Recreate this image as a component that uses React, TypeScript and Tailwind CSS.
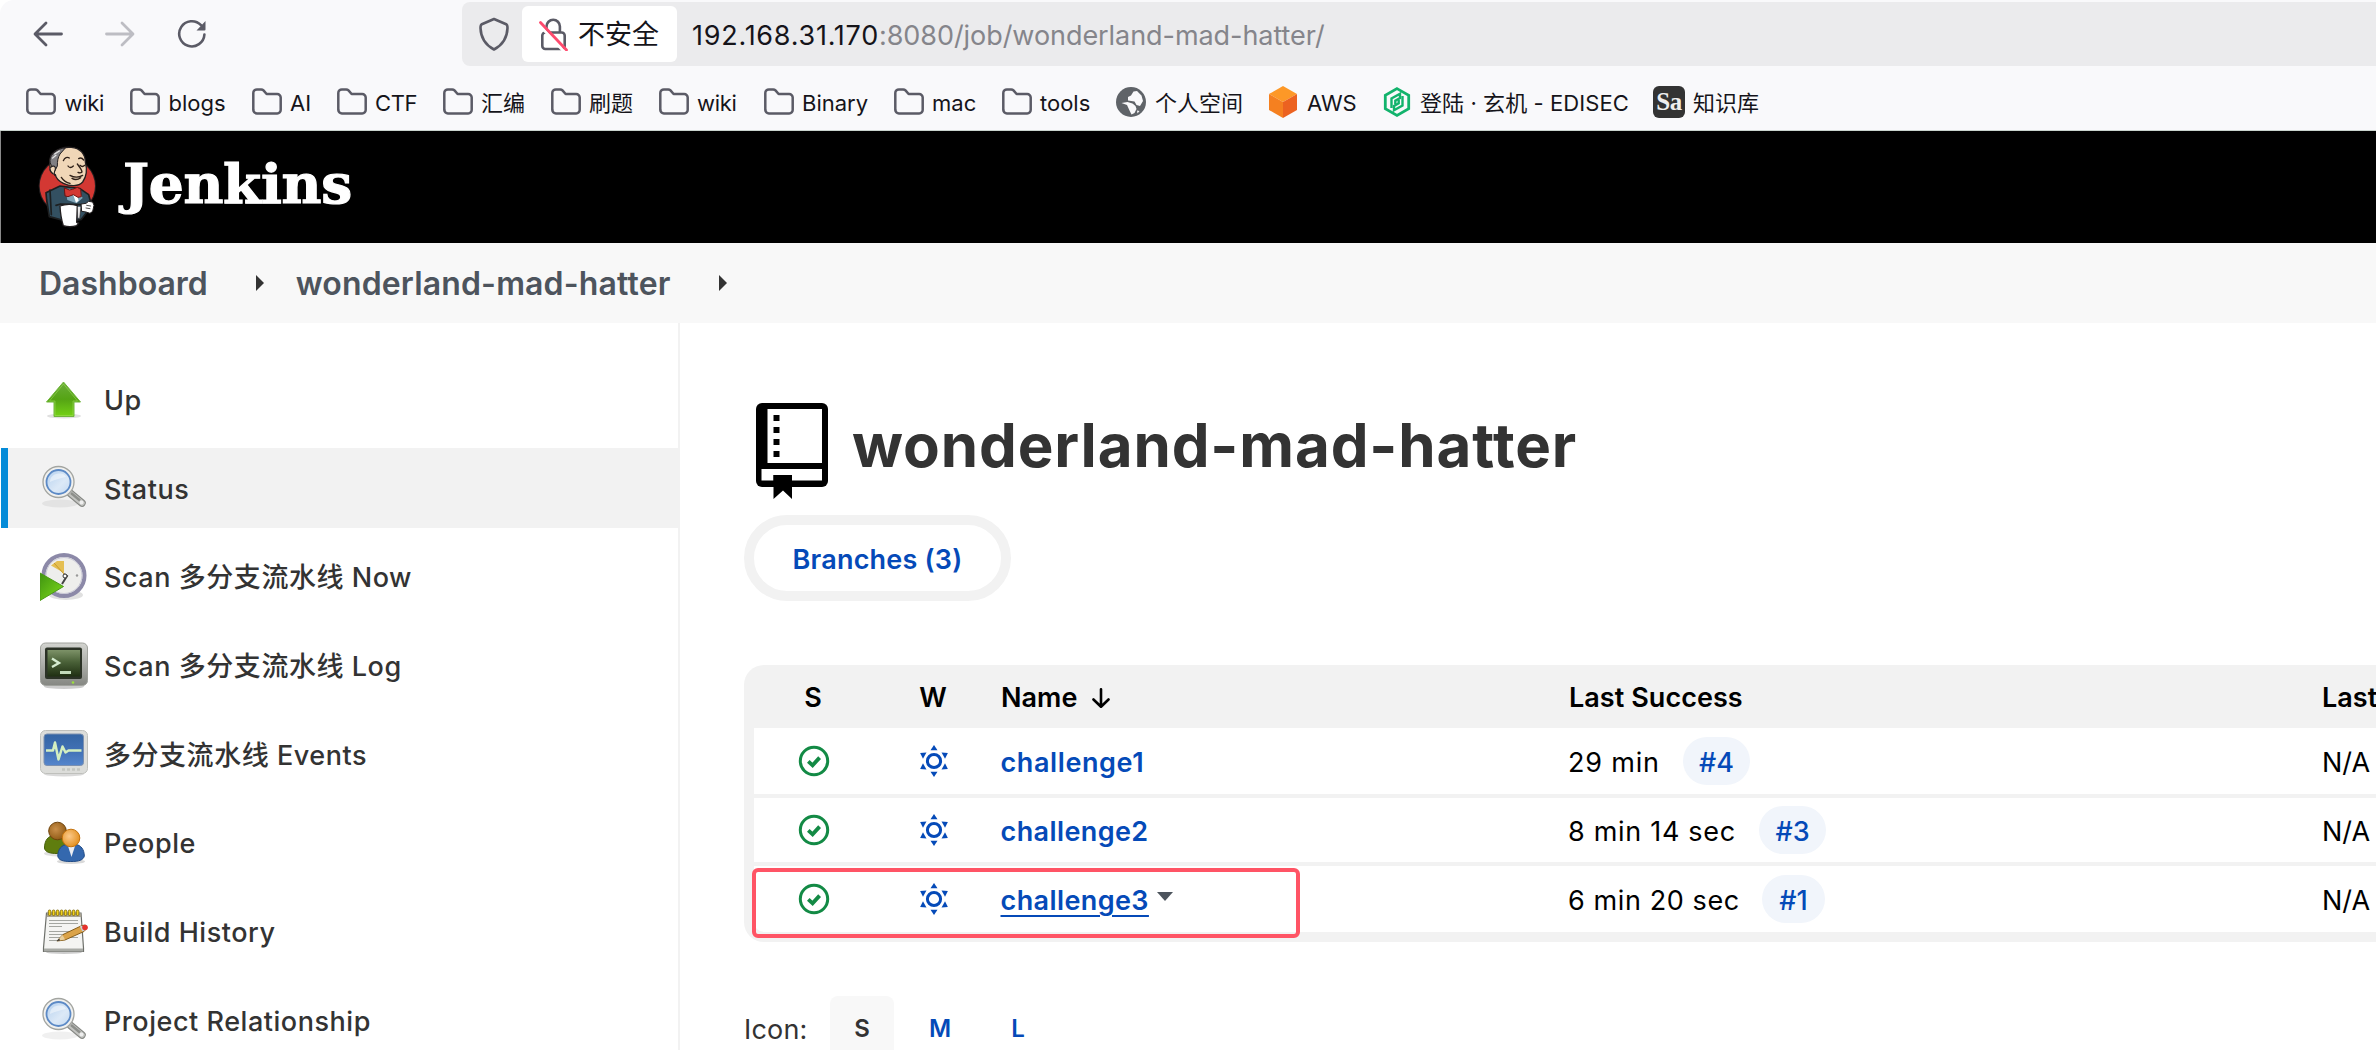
import React from "react";

const stack = "font-['Inter','Noto_Sans_CJK_SC',sans-serif]";

function BackArrow({ className, flip }: { className: string; flip?: boolean }) {
  return (
    <svg width="30" height="26" viewBox="0 0 30 26" fill="none" stroke="currentColor" strokeWidth="2.800" strokeLinecap="round" strokeLinejoin="round" className={className}>
      {flip ? <path d="M1.500 13H27.500M17 2l11 11-11 11" /> : <path d="M28.500 13H2.500M13 2L2 13l11 11" />}
    </svg>
  );
}

function Reload() {
  return (
    <svg width="30" height="30" viewBox="0 0 30 30" fill="none" className="text-[#5b5b66]">
      <path d="M24 6.200A12.600 12.600 0 1 0 27.400 15.500" stroke="currentColor" strokeWidth="2.600" strokeLinecap="round" />
      <path d="M28.500 2v8.600a1 1 0 0 1-1 1h-8z" fill="currentColor" />
    </svg>
  );
}

function Shield() {
  return (
    <svg width="30" height="34" viewBox="0 0 30 34" fill="none" stroke="#5b5b66" strokeWidth="2.600" strokeLinejoin="round">
      <path d="M15 2 2.800 7.200C1.500 7.800 1.500 9 1.500 11c.3 10 5 17 13.500 21.500C23.500 28 28.200 21 28.500 11c0-2 0-3.200-1.300-3.800z" />
    </svg>
  );
}

function LockOff() {
  return (
    <svg width="32" height="34" viewBox="0 0 32 34" fill="none">
      <path d="M8.500 15V9.500a6.700 6.700 0 0 1 13.400 0V15" stroke="#5b5b66" strokeWidth="2.600" />
      <rect x="4.300" y="15.500" width="22.400" height="16.500" rx="3" stroke="#5b5b66" strokeWidth="2.600" />
      <path d="M0 6.500 26 34.500" stroke="#fff" strokeWidth="3" />
      <path d="M2.500 5.500 28.500 33" stroke="#ff4b6e" strokeWidth="2.800" strokeLinecap="round" />
    </svg>
  );
}

function Folder() {
  return (
    <svg width="30" height="27" viewBox="0 0 30 27" fill="none" stroke="#5b5b66" strokeWidth="2.500" strokeLinejoin="round">
      <path d="M1.300 5A3.600 3.600 0 0 1 4.900 1.400h4.300c1 0 1.700.4 2.300 1L14.600 6h10.600A3.500 3.500 0 0 1 28.700 9.500v12.400a3.500 3.500 0 0 1-3.500 3.500H4.900a3.600 3.600 0 0 1-3.600-3.500z" />
    </svg>
  );
}

function Globe() {
  return (
    <svg width="30" height="30" viewBox="0 0 30 30">
      <circle cx="15" cy="15" r="15" fill="#5f6368" />
      <path d="M12 10l3-1.500 2.500-4L21 4l4.500 4.500L27 14l-3 5-3.500-1-2-3.500-6.500-1z" fill="#f9f9fb" />
      <path d="M5.500 16l6-1 5 1.500 3 2.500 1 3-2 4-3 1.500-2-4-2.500-5.500z" fill="#f9f9fb" />
      <path d="M21 23.500l2.500.5-2 2.500z" fill="#f9f9fb" />
    </svg>
  );
}

function Cube() {
  return (
    <svg width="30" height="32" viewBox="0 0 30 32">
      <path d="M15 0 29 8 15 16 1 8z" fill="#fd9827" />
      <path d="M1 8l14 8v16L1 24z" fill="#f58020" />
      <path d="M29 8 15 16v16l14-8z" fill="#ec6220" />
    </svg>
  );
}

function HexLogo() {
  return (
    <svg width="28" height="30" viewBox="0 0 28 30" fill="none" stroke="#12b36c">
      <path d="M14 1.600 25.700 8.200v13.600L14 28.400 2.300 21.800V8.200z" strokeWidth="2.800" />
      <path d="M8.500 21v-9.500L17 6.700v4.300l-4.700 2.700v3.600" strokeWidth="2.400" />
      <path d="M19.500 9v9.500L11 23.300V19l4.700-2.700v-3.600" strokeWidth="2.400" />
    </svg>
  );
}

function SaBadge() {
  return (
    <span className="flex h-8 w-8 items-center justify-center rounded-[6px] bg-[#333] font-['Liberation_Serif',serif] text-[25px] leading-none font-bold tracking-[-0.5px] text-[#eee]">
      Sa
    </span>
  );
}

const bookmarks: { label: string; icon: React.ReactNode; cls: string }[] = [
  { label: "wiki", icon: <Folder />, cls: "w-[104px] gap-[8.500px] tracking-[-0.3px]" },
  { label: "blogs", icon: <Folder />, cls: "w-[122px] gap-[8.500px]" },
  { label: "AI", icon: <Folder />, cls: "w-[85px] gap-[8px]" },
  { label: "CTF", icon: <Folder />, cls: "w-[106px] gap-[8px] tracking-[-0.4px]" },
  { label: "汇编", icon: <Folder />, cls: "w-[108px] gap-[8px]" },
  { label: "刷题", icon: <Folder />, cls: "w-[108px] gap-[8px]" },
  { label: "wiki", icon: <Folder />, cls: "w-[105px] gap-[8px] tracking-[-0.3px]" },
  { label: "Binary", icon: <Folder />, cls: "w-[130px] gap-[8px]" },
  { label: "mac", icon: <Folder />, cls: "w-[108px] gap-[8px]" },
  { label: "tools", icon: <Folder />, cls: "w-[114px] gap-[8px]" },
  { label: "个人空间", icon: <Globe />, cls: "w-[152px] gap-[9px]" },
  { label: "AWS", icon: <Cube />, cls: "w-[115px] gap-[9px]" },
  { label: "登陆 · 玄机 - EDISEC", icon: <HexLogo />, cls: "w-[270px] gap-[9px] tracking-[0.08px]" },
  { label: "知识库", icon: <SaBadge />, cls: "w-[120px] gap-[8px]" },
];

function BrowserChrome() {
  return (
    <div className="h-[130px] bg-[#f9f9fb] text-[#15141a]">
      <div className="flex h-[68px] items-center pl-[33px]">
        <BackArrow className="text-[#5b5b66]" />
        <BackArrow flip className="ml-[42px] text-[#bdbdc3]" />
        <div className="ml-[42px]">
          <Reload />
        </div>
        <div className="ml-[255px] flex h-16 flex-1 items-center rounded-l-[8px] bg-[#ebebed] pl-[17px]">
          <Shield />
          <div className="ml-[13px] flex h-[56px] w-[155px] items-center rounded-[6px] bg-white pl-[16px]">
            <LockOff />
            <span className="ml-[8px] pt-px text-[27px] leading-8 font-normal">不安全</span>
          </div>
          <span className="ml-[15px] pt-[3px] text-[27px] leading-8 tracking-[0.75px]">192.168.31.170</span>
          <span className="pt-[3px] text-[27px] leading-8 tracking-[-0.06px] text-[#85858b]">:8080/job/wonderland-mad-hatter/</span>
        </div>
      </div>
      <div className="flex h-[62px] items-center pt-[8px] pl-[26px]">
        {bookmarks.map((b, i) => (
          <div key={i} className={`flex shrink-0 items-center text-[22px] leading-7 whitespace-nowrap ${b.cls}`}>
            <span className="-mt-[3px] shrink-0">{b.icon}</span>
            <span>{b.label}</span>
          </div>
        ))}
      </div>
    </div>
  );
}

function Butler() {
  return (
    <svg width="70" height="95" viewBox="0 0 210 285" strokeLinejoin="round" strokeLinecap="round">
      <circle cx="100" cy="138" r="86" fill="#231f20" />
      <circle cx="100" cy="138" r="83" fill="#d33833" />
      <path d="M10 206h184v79H10z" fill="#000" />
      <path d="M36 158 78 138l60 8 26 18 6 22-8 26-20 26-36 8-60-16-8-50z" fill="#335061" stroke="#1d1f20" strokeWidth="5" />
      <path d="M94 146h38l14 28-18 16-28-10z" fill="#7fa5b8" />
      <path d="M116 160l10-8 8 30-8 6z" fill="#fff" />
      <path d="M56 40C66 28 90 20 112 22c26 2 42 20 42 44 6 22 3 44-8 60-12 14-38 14-58 4-10-5-22-14-24-26-14-4-18-12-16-24-2-16-2-30 8-40z" fill="#f0d6b7" stroke="#231f20" strokeWidth="4" />
      <path d="M52 76C44 64 48 48 60 38c8-8 22-14 34-14L78 42c-6 10-8 20-8 36l-6 12z" fill="#807f83" stroke="#231f20" strokeWidth="3" />
      <path d="M62 42l14-9M56 54l10-8" stroke="#e4e4e4" strokeWidth="4" />
      <path d="M50 82c8-8 16-2 14 6s-6 10-2 18" fill="#f0d6b7" stroke="#231f20" strokeWidth="3.500" />
      <g fill="none" stroke="#2f2018" strokeWidth="4">
        <path d="M88 62c4-9 12-12 18-8M134 56c6-4 12 0 15 4" />
        <path d="M102 78c4 6 10 6 16 0M138 76c4 4 10 4 14 0" />
        <path d="M130 72c6 8 14 18 14 24-4 4-8 3-12 1" />
        <path d="M108 106c14 8 24 8 38 0M114 115c10 6 18 4 26-2M82 112c8 12 16 16 26 18" />
      </g>
      <path d="M92 144l14 6 10-2 14-6 10 6 2 22-10 2-14-8-16 6-8-2z" fill="#d33833" stroke="#6d1412" strokeWidth="3" />
      <path d="M48 150l4 74M66 196l14-4 60 2" fill="none" stroke="#1d1f20" strokeWidth="5" />
      <path d="M78 198c16-6 36-6 52-1l-2 50 6 2-6 8c-12 4-28 4-40 0-6-18-9-38-10-59z" fill="#fff" stroke="#231f20" strokeWidth="4" />
      <path d="M130 200l1 34 6 2 4-36" fill="#e9e9ea" stroke="#231f20" strokeWidth="2" />
      <path d="M142 192l14-2 8-6 12 2 4 10-4 18-8 6-12-4-12-2z" fill="#fff" stroke="#231f20" strokeWidth="3" />
      <path d="M158 196l12 2M156 204l12 2" stroke="#555" strokeWidth="3" />
    </svg>
  );
}

function UpIcon() {
  return (
    <svg width="48" height="48" viewBox="0 0 48 48">
      <defs>
        <linearGradient id="up" x1="0" y1="0" x2="0" y2="1">
          <stop offset="0" stopColor="#6aad3a" />
          <stop offset=".5" stopColor="#55a414" />
          <stop offset="1" stopColor="#74d216" />
        </linearGradient>
      </defs>
      <ellipse cx="24" cy="40" rx="17" ry="2.500" fill="#000" opacity=".12" />
      <path d="M23.500 6 40.500 26H34v14.500H14V26H6.500z" fill="url(#up)" stroke="#6fb53a" strokeLinejoin="round" />
      <path d="M23.500 8 37.500 25H33v14.500H15V25H9.500z" fill="none" stroke="#a5e060" strokeWidth="1" opacity=".5" />
    </svg>
  );
}

function SearchIcon() {
  return (
    <svg width="48" height="48" viewBox="0 0 48 48">
      <defs>
        <linearGradient id="lens" x1="0" y1="0" x2="1" y2="1">
          <stop offset="0" stopColor="#b4d0ee" />
          <stop offset=".6" stopColor="#dce9f7" />
          <stop offset="1" stopColor="#c3d9f1" />
        </linearGradient>
      </defs>
      <ellipse cx="20" cy="39.500" rx="18" ry="4" fill="#000" opacity=".06" />
      <path d="M30 29 42 39" stroke="#868884" strokeWidth="7.500" strokeLinecap="round" />
      <path d="M30 29 42 39" stroke="#c3c4c1" strokeWidth="5.500" strokeLinecap="round" />
      <path d="M31 29 40 36.500" stroke="#8d8f8b" strokeWidth="2.500" />
      <circle cx="41.500" cy="38.500" r="2" fill="#eee" />
      <circle cx="18.500" cy="18" r="15.500" fill="#f1f1ef" stroke="#a3a5a1" strokeWidth="1.300" />
      <circle cx="18.500" cy="18" r="12" fill="url(#lens)" stroke="#5c8ac6" strokeWidth="1.800" />
      <path d="M10 18c0-5 4-8.500 9-8.500s6 1.500 7 3.500c-6 1-12 3-16 5z" fill="#fff" opacity=".45" />
    </svg>
  );
}

function ClockIcon() {
  return (
    <svg width="48" height="48" viewBox="0 0 48 48">
      <defs>
        <linearGradient id="play" x1="0" y1="0" x2="1" y2="1">
          <stop offset="0" stopColor="#3f9410" />
          <stop offset="1" stopColor="#7fdc1c" />
        </linearGradient>
      </defs>
      <ellipse cx="26" cy="42" rx="17" ry="5" fill="#000" opacity=".12" />
      <circle cx="24" cy="22.500" r="20.500" fill="#eeeeec" stroke="#8c89a8" strokeWidth="4" />
      <circle cx="24" cy="22.500" r="18" fill="none" stroke="#c9c8d6" strokeWidth="1" />
      <path d="M11 12.500 17 8h7v12z" fill="#e5bf52" />
      <path d="M14 10l10 11" stroke="#c79a2a" strokeWidth="1" />
      <path d="M24 21l3 2-5 8" fill="none" stroke="#444" strokeWidth="2" />
      <circle cx="25" cy="23" r="2" fill="#fff" stroke="#333" />
      <circle cx="37" cy="22.500" r="1.200" fill="#999" />
      <path d="M0 20 23.500 33.500 0 47.500z" fill="url(#play)" stroke="#4b9a17" strokeWidth="1" />
    </svg>
  );
}

function TerminalIcon() {
  return (
    <svg width="48" height="48" viewBox="0 0 48 48">
      <defs>
        <linearGradient id="tframe" x1="0" y1="0" x2="0" y2="1">
          <stop offset="0" stopColor="#d3d4d0" />
          <stop offset="1" stopColor="#858782" />
        </linearGradient>
        <linearGradient id="tscreen" x1="0" y1="0" x2="0" y2="1">
          <stop offset="0" stopColor="#7d9268" />
          <stop offset=".45" stopColor="#4a6138" />
          <stop offset="1" stopColor="#1f2f12" />
        </linearGradient>
      </defs>
      <ellipse cx="24" cy="44.500" rx="20" ry="2.500" fill="#000" opacity=".2" />
      <rect x=".5" y="1" width="47" height="42.500" rx="5" fill="url(#tframe)" stroke="#a0a29d" />
      <rect x="5" y="5.500" width="37" height="31.500" rx="2" fill="#2b3226" />
      <rect x="7.500" y="8" width="32.500" height="26.500" fill="url(#tscreen)" />
      <path d="M12 16.500l7 4.500-7 4" fill="none" stroke="#d5ecd0" strokeWidth="2.400" />
      <path d="M20 30.500h11" stroke="#c3dbbb" strokeWidth="3" />
      <circle cx="33" cy="40.500" r="1.300" fill="#9be03c" />
    </svg>
  );
}

function MonitorIcon() {
  return (
    <svg width="48" height="48" viewBox="0 0 48 48">
      <defs>
        <linearGradient id="mscreen" x1="0" y1="0" x2="0" y2="1">
          <stop offset="0" stopColor="#3465a4" />
          <stop offset=".5" stopColor="#4170b4" />
          <stop offset="1" stopColor="#5586cc" />
        </linearGradient>
      </defs>
      <ellipse cx="24" cy="44" rx="20" ry="2.500" fill="#000" opacity=".15" />
      <rect x=".5" y=".5" width="47" height="43" rx="5" fill="#dcddda" stroke="#bfc0bc" />
      <rect x="4" y="4" width="39.500" height="31.500" rx="3" fill="url(#mscreen)" stroke="#7c90b0" />
      <path d="M6 20.500h7l2-8 3.500 17 4-13 3 6 3-2h13" fill="none" stroke="#d4efc0" strokeWidth="2.500" strokeLinejoin="round" />
      <path d="M22 39.500h3m2 0h3m2 0h3m2 0h3" stroke="#c4c6c1" strokeWidth="2.500" />
    </svg>
  );
}

function PeopleIcon() {
  return (
    <svg width="48" height="48" viewBox="0 0 48 48">
      <defs>
        <radialGradient id="h1" cx=".4" cy=".4" r=".7">
          <stop offset="0" stopColor="#c98f4a" />
          <stop offset="1" stopColor="#8a5510" />
        </radialGradient>
        <radialGradient id="h2" cx=".4" cy=".4" r=".7">
          <stop offset="0" stopColor="#fbc98a" />
          <stop offset="1" stopColor="#e08a14" />
        </radialGradient>
      </defs>
      <ellipse cx="18" cy="34.500" rx="14" ry="3" fill="#000" opacity=".12" />
      <path d="M4.500 29c0-8 4-12 9-12.500h9c5 .5 8 5 8 12.500-1 4-5 5.500-13 5.500S5 33 4.500 29z" fill="#5f7d0e" stroke="#46600a" />
      <circle cx="17.500" cy="12" r="8.800" fill="url(#h1)" stroke="#6f430c" />
      <ellipse cx="31" cy="42.500" rx="14" ry="2.500" fill="#000" opacity=".15" />
      <path d="M17.800 37c0-7 4-11 9-11.500h9c5 .5 8.500 5 8.500 11.500-1 4-5 5.500-13.500 5.500S18.500 41 17.800 37z" fill="#3468ae" stroke="#1f4a86" />
      <path d="M28 27h7l-3.500 11z" fill="#eceef2" />
      <circle cx="31" cy="19" r="8.800" fill="url(#h2)" stroke="#c4720c" />
    </svg>
  );
}

function NotepadIcon() {
  return (
    <svg width="48" height="48" viewBox="0 0 48 48">
      <ellipse cx="24" cy="44.500" rx="18" ry="1.500" fill="#000" opacity=".2" />
      <path d="M6.500 5H41l2.500 35v3.500h-40V40z" fill="#f4f4f2" stroke="#6e706b" strokeWidth="1.200" />
      <path d="M7 5.500h34l.3 3.500H6.700z" fill="#a9a392" />
      <path d="M4 40.500h39v3H4z" fill="#a8aaa5" />
      {[9.5, 13.5, 17.5, 21.5, 25.5, 29.5, 33.5, 37.5].map((x) => (
        <rect key={x} x={x - 1.2} y="2" width="2.600" height="5.500" rx="1.200" fill="#f2d21c" stroke="#7a6508" strokeWidth=".8" />
      ))}
      <path d="M9 12.500h29M9 15.500h29M9 18.500h13M9 23.500h29M9 26.500h20M9 29.500h29M9 32.500h8" stroke="#a4a6a1" strokeWidth="1" />
      <path d="M17 33l6-6.500L42 17.500l3.500-.5 1.500 3-3 3.500L25 32z" fill="#dba348" stroke="#7d5310" strokeWidth=".9" />
      <path d="M17 33l5.500-6 2.500 4.500z" fill="#e9cf9d" />
      <path d="M16.500 33.300l2.600-2.700 1 1.800z" fill="#333" />
      <path d="M41 18l2.500 5" stroke="#c9ced6" strokeWidth="2.500" />
      <circle cx="45" cy="19.500" r="2.800" fill="#e5322d" />
    </svg>
  );
}

const tasks = [
  { label: "Up", icon: <UpIcon /> },
  { label: "Status", icon: <SearchIcon />, active: true },
  { label: "Scan 多分支流水线 Now", icon: <ClockIcon /> },
  { label: "Scan 多分支流水线 Log", icon: <TerminalIcon /> },
  { label: "多分支流水线 Events", icon: <MonitorIcon /> },
  { label: "People", icon: <PeopleIcon /> },
  { label: "Build History", icon: <NotepadIcon /> },
  { label: "Project Relationship", icon: <SearchIcon /> },
];

function Sidebar() {
  return (
    <nav className="flex w-[680px] shrink-0 flex-col gap-[8.7px] border-r-2 border-[#f2f2f2] pt-[36.500px]">
      {tasks.map((t) => (
        <div key={t.label} className="flex h-20 shrink-0 pl-px">
          <div className={`flex flex-1 items-center gap-[16px] border-l-[7px] pl-8 ${t.active ? "border-[#058bd8] bg-[#f2f2f2]" : "border-transparent"}`}>
            {t.icon}
            <span className="pt-[3px] text-[27px] leading-8 font-[450] tracking-[0.54px] text-[#333]">{t.label}</span>
          </div>
        </div>
      ))}
    </nav>
  );
}

function RepoIcon() {
  return (
    <svg width="74" height="96" viewBox="0 0 74 96">
      <rect x="1" y="0" width="72" height="84" rx="6" fill="#000" />
      <path d="M12.500 6H67v54H12.500zM6.500 66H67v11.500H36.500V72H18.500v5.500h-12z" fill="#fff" />
      <path d="M18.500 72h18.500v24L28 87.500 18.500 96z" fill="#000" />
      <path d="M18.500 12h6v6h-6zM18.500 24h6v6h-6zM18.500 36h6v6h-6zM18.500 48h6v6h-6z" fill="#000" />
    </svg>
  );
}

function SuccessIcon() {
  return (
    <svg width="32" height="32" viewBox="0 0 32 32" fill="none" stroke="#138a45">
      <circle cx="16" cy="16" r="13.700" strokeWidth="3" />
      <path d="M10.300 16.300l4.300 4 7-7.700" strokeWidth="3.800" />
    </svg>
  );
}

function SunIcon() {
  return (
    <svg width="32" height="32" viewBox="0 0 32 32" fill="#054ab8">
      <circle cx="16" cy="16" r="6.600" fill="none" stroke="#054ab8" strokeWidth="3" />
      {[0, 60, 120, 180, 240, 300].map((a) => (
        <path key={a} d="M16 0l3.500 5.300h-7z" transform={`rotate(${a} 16 16)`} />
      ))}
    </svg>
  );
}

const rows = [
  { name: "challenge1", time: "29 min", build: "#4", h: "h-[66px]", pill: "w-[67px]", nameCls: "tracking-[0.6px]", timeWidth: "w-[91px] tracking-[0.8px]" },
  { name: "challenge2", time: "8 min 14 sec", build: "#3", h: "h-[64px]", pill: "w-[67px]", nameCls: "tracking-[0.4px]", timeWidth: "w-[167px] tracking-[0.7px]" },
  { name: "challenge3", time: "6 min 20 sec", build: "#1", h: "h-[66px]", pill: "w-[63px]", nameCls: "tracking-[0.4px] underline decoration-2 underline-offset-[5px]", timeWidth: "w-[170px] tracking-[0.6px]", hover: true },
];

const cols = "grid grid-cols-[120px_120px_568px_754px_60px] items-center";

function BranchTable() {
  return (
    <div className="relative mt-[64px] w-[1700px] rounded-[20px] bg-[#f2f2f2] pb-[10px] pl-[10px] text-[27px] leading-8 text-black">
      <div className={`${cols} h-[63px] pt-[2px] font-semibold tracking-[0.05px]`}>
        <span className="pr-[2px] text-center">S</span>
        <span className="pr-[2px] text-center">W</span>
        <span className="flex items-center gap-[15px] pl-[7px]">
          Name
          <svg width="18" height="20" viewBox="0 0 18 20" fill="none" stroke="#000" strokeWidth="2.600" strokeLinecap="round" strokeLinejoin="round">
            <path d="M9 1.300v17M1.500 11.500 9 18.700l7.500-7.200" />
          </svg>
        </span>
        <span className="pl-[7px]">Last Success</span>
        <span className="pl-[6px]">Last</span>
      </div>
      <div className="flex flex-col gap-1">
        {rows.map((r) => (
          <div key={r.name} className={`${cols} ${r.h} bg-white ${r.hover ? "rounded-bl-[10px]" : ""}`}>
            <span className="flex justify-center">
              <SuccessIcon />
            </span>
            <span className="flex justify-center">
              <SunIcon />
            </span>
            <span className="flex items-center pt-[3px] pl-[6.500px]">
              <span className={`font-semibold text-[#054ab8] ${r.nameCls}`}>{r.name}</span>
              {r.hover && (
                <svg width="16" height="9" viewBox="0 0 16 9" className="-mt-[8px] ml-[8px]">
                  <path d="M0 0h16L8 9z" fill="#4d545d" />
                </svg>
              )}
            </span>
            <span className="flex items-center gap-[24px] pl-[6px]">
              <span className={`pt-[3px] whitespace-nowrap ${r.timeWidth}`}>{r.time}</span>
              <span className={`flex h-12 items-center justify-center rounded-full bg-[#f1f5fb] pt-[3px] font-medium text-[#054ab8] ${r.pill}`}>{r.build}</span>
            </span>
            <span className="pt-[3px] pl-[6px]">N/A</span>
          </div>
        ))}
      </div>
      <div className="absolute top-[203px] left-[8px] h-[70px] w-[548px] rounded-[6px] border-4 border-[#ff5465]" />
    </div>
  );
}

export default function App() {
  return (
    <div className={`flex h-[1050px] w-[2376px] flex-col overflow-hidden rounded-tl-[14px] bg-white ${stack}`}>
      <BrowserChrome />
      <div className="h-px bg-[#c9d3cd]" />
      <header className="flex h-[112px] shrink-0 items-center border-l border-[#8a8a8a] bg-black pl-[33px]">
        <Butler />
        <span className="-mt-2 ml-[19px] font-['DejaVu_Serif',serif] text-[55px] leading-none font-bold tracking-[-0.3px] text-white [-webkit-text-stroke:1.2px_white]">Jenkins</span>
      </header>
      <div className="flex h-[80px] shrink-0 items-center bg-[#f8f8f8] pl-[39px] text-[32px] leading-10 font-semibold tracking-[0.15px] text-[#4d545d]">
        <span className="pt-[2px] tracking-[0px]">Dashboard</span>
        <svg width="8" height="16" viewBox="0 0 8 16" className="ml-[48px]">
          <path d="M0 0l8 8-8 8z" fill="#333" />
        </svg>
        <span className="ml-[32px] pt-[2px]">wonderland-mad-hatter</span>
        <svg width="8" height="16" viewBox="0 0 8 16" className="ml-[48px]">
          <path d="M0 0l8 8-8 8z" fill="#333" />
        </svg>
      </div>
      <div className="flex min-h-0 flex-1">
        <Sidebar />
        <main className="flex min-w-0 flex-1 flex-col items-start overflow-hidden pl-16">
          <div className="mt-[80px] flex h-[96px] items-start gap-[23px] pl-[11px]">
            <RepoIcon />
            <h1 className="pt-[4px] text-[60px] leading-[76px] font-bold tracking-[0.88px] text-[#333]">wonderland-mad-hatter</h1>
          </div>
          <div className="mt-[16px] flex h-[86px] w-[267px] shrink-0 items-center justify-center rounded-[43px] border-[10px] border-[#f2f2f2] pt-[4px] text-[27px] leading-8 font-semibold tracking-[0.2px] text-[#054ab8]">
            Branches (3)
          </div>
          <BranchTable />
          <div className="mt-[54px] flex h-16 items-center text-[24px] font-semibold text-[#054ab8]">
            <span className="w-[86px] pt-[3px] text-[27px] leading-8 font-normal tracking-[0.2px] text-[#333]">Icon:</span>
            <span className="flex h-16 w-16 items-center justify-center rounded-[8px] bg-[#f8f8f8] pt-[2px] text-[#333]">S</span>
            <span className="ml-[14px] flex h-16 w-16 items-center justify-center pt-[2px]">M</span>
            <span className="ml-[14px] flex h-16 w-16 items-center justify-center pt-[2px]">L</span>
          </div>
        </main>
      </div>
    </div>
  );
}
